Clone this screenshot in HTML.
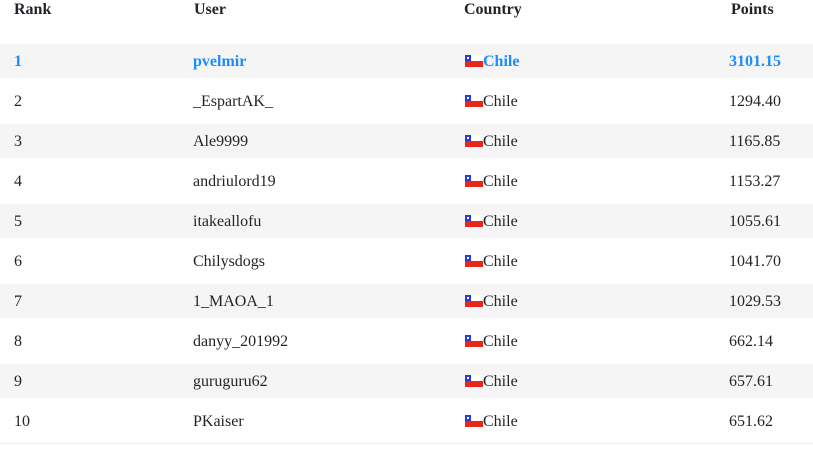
<!DOCTYPE html>
<html><head><style>
body{margin:0;width:813px;height:450px;background:#fff;font-family:"Liberation Serif",serif;font-size:16px;color:#212529;overflow:hidden;position:relative}
.h{position:absolute;top:1px;height:20px;line-height:18px;font-weight:bold}
.r{position:absolute;left:0;width:813px;height:34px;line-height:36px}
.r.g{background:#f5f5f5}
.r span{position:absolute;top:0}
.c1{left:14px}.c2{left:193px}.c3{left:465px}.c4{left:729px}
.r.b{color:#1a8cff;font-weight:bold}
.f{display:inline-block;width:18px;height:12px;vertical-align:-1px;background:linear-gradient(#fff 0 50%,#e8261a 50%);position:relative}
.f::before{content:"";display:block;width:6px;height:6px;background:#2b3ad0}
.f::after{content:"";position:absolute;left:2px;top:2px;width:2px;height:2px;background:#fff}
.line{position:absolute;left:0;width:813px;height:1px;background:#eee;top:443px}
</style></head><body>
<div class="h" style="left:14px">Rank</div>
<div class="h" style="left:194px">User</div>
<div class="h" style="left:464px">Country</div>
<div class="h" style="left:731px">Points</div>
<div class="r g b" style="top:44px"><span class="c1">1</span><span class="c2">pvelmir</span><span class="c3"><i class="f"></i>Chile</span><span class="c4">3101.15</span></div>
<div class="r" style="top:84px"><span class="c1">2</span><span class="c2">_EspartAK_</span><span class="c3"><i class="f"></i>Chile</span><span class="c4">1294.40</span></div>
<div class="r g" style="top:124px"><span class="c1">3</span><span class="c2">Ale9999</span><span class="c3"><i class="f"></i>Chile</span><span class="c4">1165.85</span></div>
<div class="r" style="top:164px"><span class="c1">4</span><span class="c2">andriulord19</span><span class="c3"><i class="f"></i>Chile</span><span class="c4">1153.27</span></div>
<div class="r g" style="top:204px"><span class="c1">5</span><span class="c2">itakeallofu</span><span class="c3"><i class="f"></i>Chile</span><span class="c4">1055.61</span></div>
<div class="r" style="top:244px"><span class="c1">6</span><span class="c2">Chilysdogs</span><span class="c3"><i class="f"></i>Chile</span><span class="c4">1041.70</span></div>
<div class="r g" style="top:284px"><span class="c1">7</span><span class="c2">1_MAOA_1</span><span class="c3"><i class="f"></i>Chile</span><span class="c4">1029.53</span></div>
<div class="r" style="top:324px"><span class="c1">8</span><span class="c2">danyy_201992</span><span class="c3"><i class="f"></i>Chile</span><span class="c4">662.14</span></div>
<div class="r g" style="top:364px"><span class="c1">9</span><span class="c2">guruguru62</span><span class="c3"><i class="f"></i>Chile</span><span class="c4">657.61</span></div>
<div class="r" style="top:404px"><span class="c1">10</span><span class="c2">PKaiser</span><span class="c3"><i class="f"></i>Chile</span><span class="c4">651.62</span></div>
<div class="line"></div>
</body></html>
